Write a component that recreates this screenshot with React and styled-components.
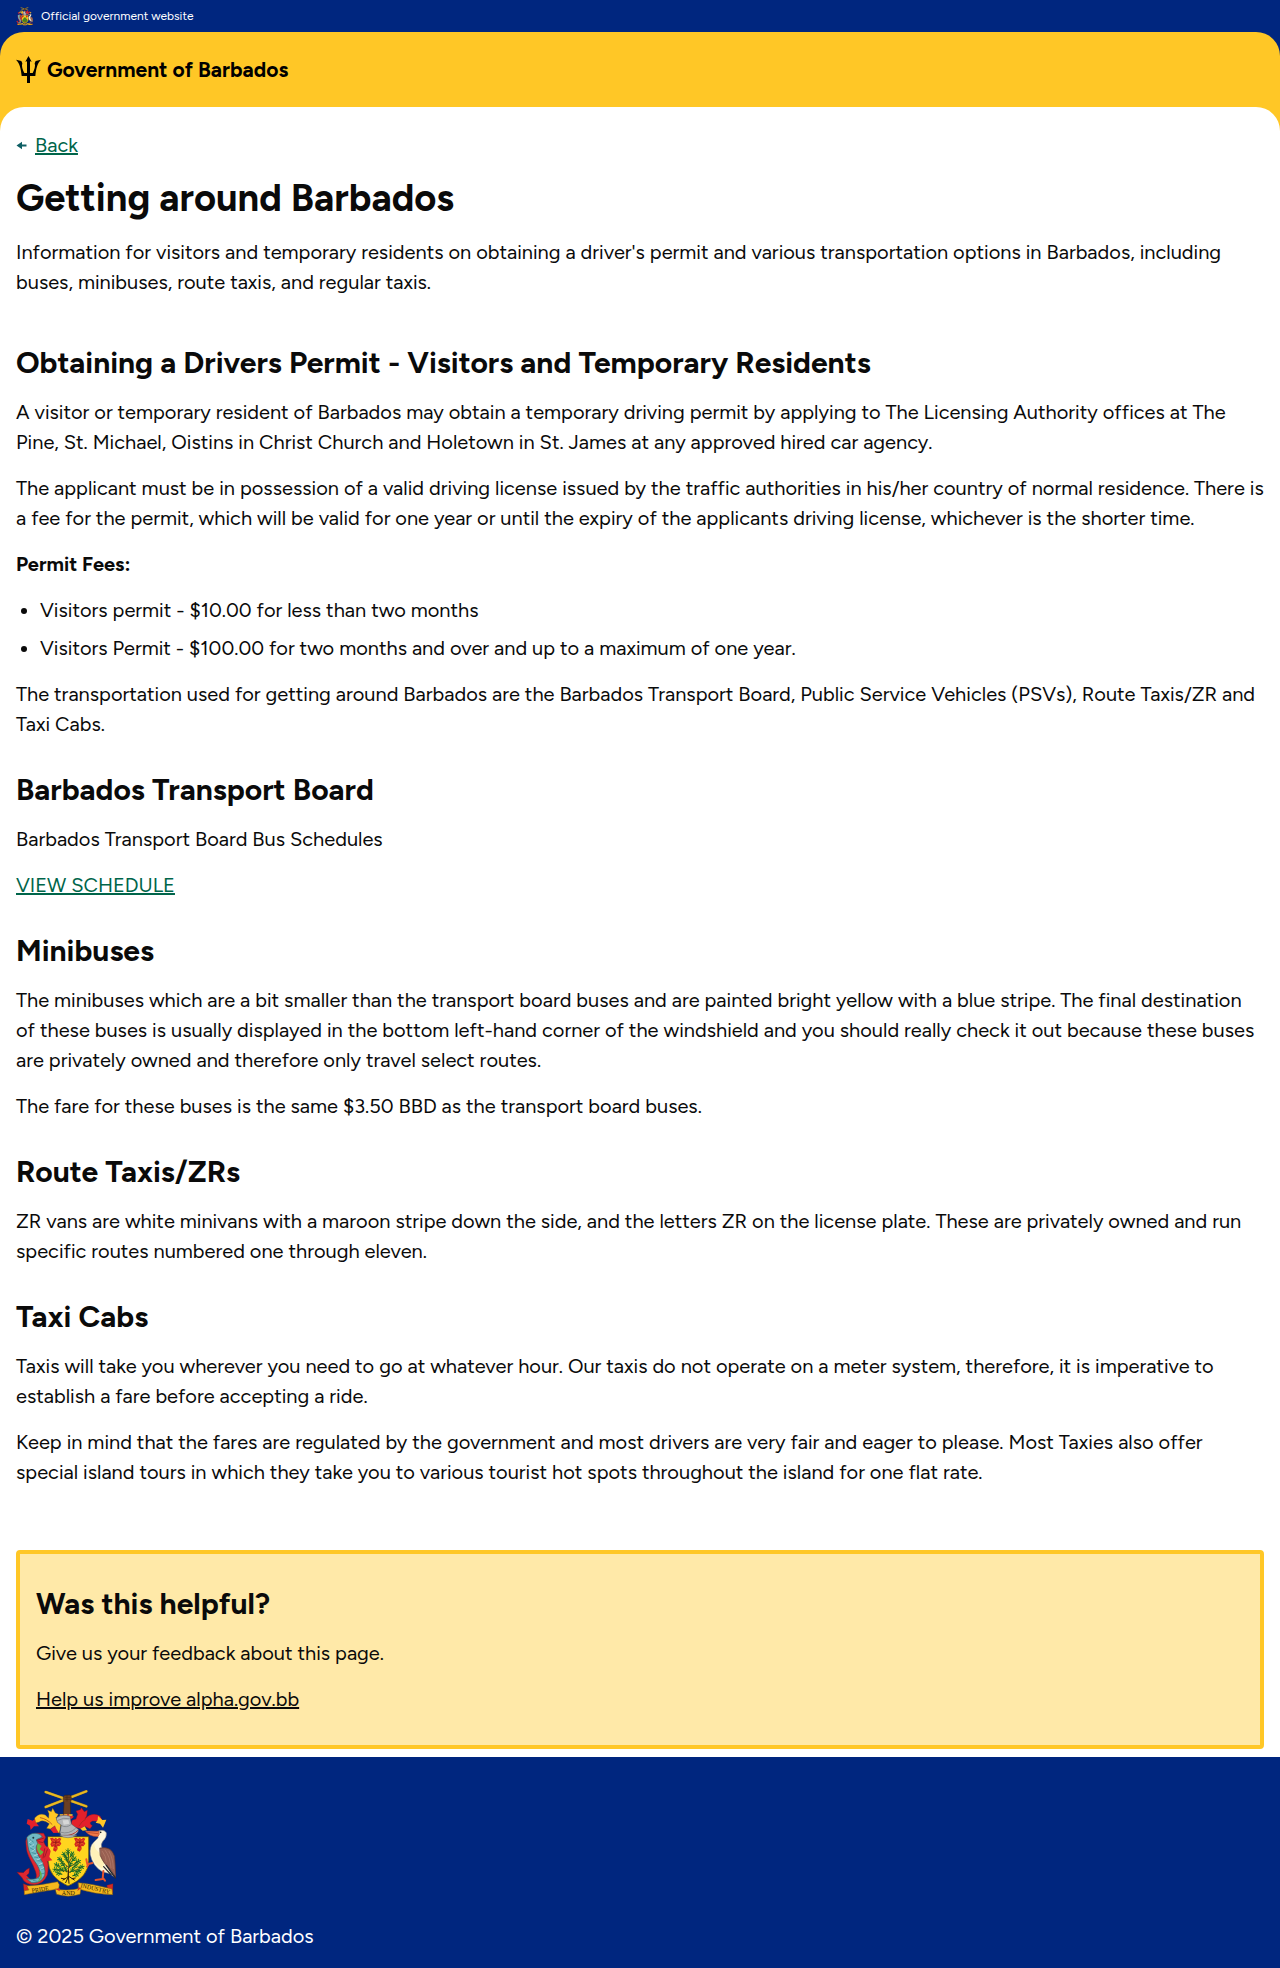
import React from "react";
import styled, { createGlobalStyle } from "styled-components";

const color = {
  blue: "#00267f",
  yellow: "#ffc726",
  paleYellow: "#ffe9a8",
  green: "#00654a",
  teal: "#0e5f64",
  ink: "#0a0a0a",
  white: "#ffffff",
};

const GlobalStyle = createGlobalStyle`
  *, *::before, *::after {
    box-sizing: border-box;
  }
  body {
    margin: 0;
    background: ${color.white};
    color: ${color.ink};
    font-family: Figtree, Lato, Roboto, sans-serif;
    font-size: 20px;
    line-height: 30px;
  }
`;

const Page = styled.div`
  display: flex;
  flex-direction: column;
  min-height: 100vh;
`;

const OfficialBar = styled.div`
  display: flex;
  align-items: center;
  gap: 8px;
  height: 32px;
  padding: 0 16px;
  background: ${color.blue};
  color: ${color.white};
  font-size: 12px;
  line-height: 16px;
`;

const Backdrop = styled.div`
  background: ${(p) => p.$color};
`;

const Masthead = styled.header`
  display: flex;
  align-items: center;
  height: 75px;
  padding: 0 16px;
  border-radius: 24px 24px 0 0;
  background: ${color.yellow};
`;

const Brand = styled.a`
  display: flex;
  align-items: center;
  gap: 6px;
  color: #000000;
  font-size: 21px;
  font-weight: 700;
  text-decoration: none;
`;

const Main = styled.main`
  padding: 23px 16px 8px;
  border-radius: 24px 24px 0 0;
  background: ${color.white};
`;

const BackRow = styled.nav`
  display: flex;
  align-items: center;
  gap: 8px;
  margin-bottom: 15px;
`;

const Link = styled.a`
  color: ${(p) => (p.$plain ? color.ink : color.green)};
  text-decoration: underline;
  text-decoration-thickness: 2px;
`;

const Title = styled.h1`
  margin: 0 0 16px;
  font-size: 38px;
  line-height: 46px;
  font-weight: 700;
`;

const Text = styled.p`
  margin: 0;
`;

const Article = styled.article`
  display: flex;
  flex-direction: column;
  gap: 32px;
  margin-top: 47px;
  margin-bottom: 63px;
`;

const Section = styled.section`
  display: flex;
  flex-direction: column;
  align-items: flex-start;
  gap: 16px;
`;

const Heading = styled.h2`
  margin: 0;
  font-size: 30px;
  line-height: 37px;
  font-weight: 700;
`;

const List = styled.ul`
  display: flex;
  flex-direction: column;
  gap: 8px;
  margin: 0;
  padding-left: 24px;
`;

const Feedback = styled(Section)`
  padding: 31px 16px;
  border: 4px solid ${color.yellow};
  border-radius: 4px;
  background: ${color.paleYellow};
`;

const Footer = styled.footer`
  display: flex;
  flex: 1;
  flex-direction: column;
  align-items: flex-start;
  gap: 22px;
  padding: 32px 16px 16px;
  background: ${color.blue};
  color: ${color.white};
`;

const Drawing = styled.svg`
  display: block;
  flex: none;
`;

function Trident() {
  return (
    <Drawing width="25" height="27" viewBox="48 168 75 81" aria-hidden="true">
      <g fill="#000000">
        <path d="M85.500 168 L95 185 L90 184 V219 H98 C103 210 107 198 104 190 L107 183 L123 179 C112 190 108 206 106 228 H90 V249 H81 V228 H65 C63 206 59 190 48 179 L64 183 L67 190 C64 198 68 210 73 219 H81 V184 L76 185 Z" />
      </g>
    </Drawing>
  );
}

function BackArrow() {
  return (
    <Drawing width="11" height="9" viewBox="0 0 11 9" aria-hidden="true">
      <path d="M0.500 4.500 L6 0.800 V3.500 H10.500 V5.500 H6 V8.200 Z" fill={color.teal} />
    </Drawing>
  );
}

const boughs = [
  [174, 206, 0], [163, 215, -35], [186, 214, 35], [150, 229, -50], [170, 227, -10],
  [192, 228, 40], [204, 236, 65], [141, 246, -65], [158, 243, -35], [181, 243, 20],
  [197, 248, 55], [214, 252, 75], [137, 260, -80], [153, 259, -50], [205, 264, 75],
  [188, 261, 45], [166, 257, -20], [146, 271, -75], [198, 275, 70],
];

function Bough({ x, y, angle }) {
  return (
    <g transform={`translate(${x} ${y}) rotate(${angle})`}>
      <path d="M0 10 V-9 M0 6 L-6 1 M0 6 L6 1 M0 0 L-6 -5 M0 0 L6 -5" stroke="#1f7a2e" strokeWidth="2.800" fill="none" />
      <path d="M0 10 V-4" stroke="#173f17" strokeWidth="1.400" />
    </g>
  );
}

function Flower({ x }) {
  return (
    <g transform={`translate(${x} 180)`}>
      <path d="M-17 -14 L-8 -16 L-5 -11 L0 -16 L6 -11 L10 -16 L17 -13 L13 -5 L17 2 L11 10 L5 9 L6 18 L0 26 L-8 22 L-5 10 L-12 12 L-16 4 L-12 -4 Z" fill="#d3261f" />
      <path d="M-10 -9 L-3 -4 L1 -11 M5 -6 L11 -9 M-10 4 L-3 1 L1 7 L6 0 L12 4 M-3 14 L3 18" stroke="#ee8a22" strokeWidth="1.500" fill="none" />
      <path d="M-7 -2 L8 -2 M0 -7 V10" stroke="#7b1712" strokeWidth="1.600" />
    </g>
  );
}

function Crest({ width, height }) {
  return (
    <Drawing width={width} height={height} viewBox="18 18 300 330" role="img" aria-label="Barbados coat of arms">
      <g strokeLinecap="round" strokeLinejoin="round">
        {/* Arm holding crossed sugar canes */}
        <path d="M107 27 L229 70 M107 72 L229 25" stroke="#a87d18" strokeWidth="8" />
        <path d="M107 27 L229 70 M107 72 L229 25" stroke="#e8b923" strokeWidth="6" />
        <path d="M160 94 L162 60 Q156 42 164 37 L180 36 Q188 42 181 60 L182 94 Z" fill="#6b3f24" stroke="#33200f" strokeWidth="1.500" />
        <path d="M165 43 H181 M165 49 H182 M171 37 V54" stroke="#3d2413" strokeWidth="1.500" />

        {/* Mantling */}
        <path d="M53 108 L68 113 L80 104 L79 119 L87 130 L72 130 L62 141 L60 128 L50 122 Z" fill="#e3202b" />
        <path d="M74 105 Q88 88 106 96 L116 106 L117 92 L113 82 L124 86 L128 76 L136 90 L145 94 L139 104 L144 119 L153 122 L148 151 Q135 143 135 128 L121 138 L110 136 L118 122 Q99 108 87 117 L78 119 Z" fill="#ffc726" stroke="#946d10" strokeWidth="1" />
        <path d="M121 139 L134 129 L146 149 L130 150 Z" fill="#e3202b" />
        <path d="M146 102 Q169 84 192 101 L181 110 L151 112 Z" fill="#e3202b" />
        <path d="M187 112 L198 108 L203 94 L198 84 L211 80 L214 74 L223 86 L232 82 L230 99 L225 107 Q247 86 270 99 L276 111 L264 115 L248 114 Q233 119 247 128 L240 137 L224 130 L212 137 L197 133 L192 148 L181 130 Z" fill="#e3202b" stroke="#941117" strokeWidth="1" />
        <path d="M264 99 L277 111 L289 110 L285 120 L279 134 L270 122 L257 119 L263 111 Z" fill="#ffc726" />
        <path d="M211 137 L224 130 L231 142 L218 143 Z" fill="#ffc726" />
        <path d="M91 104 Q112 108 126 124 M226 109 Q215 115 207 129" stroke="#9b261d" strokeWidth="2" fill="none" />
        <path d="M151 96 H158 M164 96 H170 M178 96 H186" stroke="#ffc726" strokeWidth="5" />

        {/* Helmet */}
        <path d="M139 104 Q159 92 180 100 L184 123 L205 139 Q208 150 188 160 Q169 170 153 159 L150 148 L154 126 Q138 120 139 104 Z" fill="#b4b6b8" stroke="#4c4f54" strokeWidth="1.500" />
        <path d="M143 112 Q162 102 178 107 M155 128 Q169 136 183 125 M153 148 Q176 155 196 137" stroke="#74787d" strokeWidth="2" fill="none" />
        <path d="M158 112 L175 111 L178 122 L161 125 Z" fill="#d6d7d7" />
        <path d="M161 159 Q191 157 203 143" stroke="#bd3830" strokeWidth="3" fill="none" />

        {/* Shield */}
        <path d="M114 161 H236 V232 Q236 283 174 309 Q115 283 114 232 Z" fill="#ffd51f" stroke="#5c4a08" strokeWidth="2" />
        <path d="M150 157 Q173 172 200 157 Z" fill="#b4b6b8" stroke="#61656b" strokeWidth="1.500" />
        <Flower x={137} />
        <Flower x={209} />
        <path d="M175 205 Q179 245 174 281 M175 252 L149 233 M176 254 L204 236 M175 265 L145 261 M176 268 L209 258 M175 240 L163 218 M176 240 L189 218" stroke="#4a3517" strokeWidth="2.500" fill="none" />
        {boughs.map(([x, y, angle]) => (
          <Bough key={`${x}-${y}`} x={x} y={y} angle={angle} />
        ))}
        <path d="M175 262 V285 M175 281 L159 291 M175 282 L167 299 M175 280 L177 301 M176 280 L193 291 M164 288 L154 286 M186 287 L196 285" stroke="#2f210f" strokeWidth="3" fill="none" />

        {/* Dolphin */}
        <path d="M83 150 L101 151 L107 163 L101 176 L106 187 L118 199 L112 223 L109 218 Q119 250 112 276 Q101 303 73 305 Q44 304 36 284 L21 268 L40 269 Q49 258 58 255 L57 271 L50 277 Q61 294 74 291 Q82 284 77 266 Q69 246 60 229 Q48 207 48 184 Q44 161 64 154 Z" fill="#df2730" stroke="#7f1724" strokeWidth="1.500" />
        <path d="M51 163 Q65 144 90 154 L97 162 L79 170 L83 182 Q73 194 84 216 Q110 254 104 277 Q94 302 65 299 L49 287 Q75 292 87 282 Q95 268 81 245 Q56 212 54 190 Z" fill="#70b9c4" stroke="#28676d" strokeWidth="2" />
        <path d="M60 169 L70 177 M59 183 L70 190 M61 195 L72 201 M66 209 L77 212 M73 222 L84 224 M80 233 L92 234 M87 247 L98 246 M92 259 L103 257 M91 273 L102 271 M84 286 L96 285 M70 292 L81 295" stroke="#337e8b" strokeWidth="2" />
        <path d="M64 174 L58 179 M71 185 L62 190 M75 199 L66 205 M83 214 L72 219 M91 226 L81 231 M98 240 L87 245 M101 254 L91 259" stroke="#c1e4e6" strokeWidth="2" />
        <path d="M84 181 L95 189 L89 199 L101 207 L92 217 Q80 205 81 189 Z" fill="#67b43d" />
        <path d="M98 212 L113 190 L122 204 L118 222 L127 232 L111 235 Z" fill="#df2730" />
        <path d="M91 267 Q97 281 87 293" stroke="#67b43d" strokeWidth="4" fill="none" />
        <path d="M104 197 L99 225 M112 200 L104 222 M81 172 L102 165 M86 176 L99 179" stroke="#811521" strokeWidth="2" />
        <circle cx="70" cy="164" r="3" fill="#193a3e" />

        {/* Pelican */}
        <path d="M263 145 Q280 137 289 149 Q291 164 279 174 Q270 185 277 197 L299 222 L309 246 L316 285 L300 272 L277 266 Q248 249 241 215 Q238 191 251 178 L264 165 Z" fill="#fff8dc" stroke="#91887c" strokeWidth="1.500" />
        <path d="M253 181 Q252 198 267 208 L284 236 L277 257 Q250 245 244 214 Q240 193 253 181 Z" fill="#fff1b9" />
        <path d="M270 195 Q304 188 314 220 L318 284 L300 258 Q282 244 271 218 Z" fill="#996052" stroke="#542e2a" strokeWidth="2" />
        <path d="M277 205 Q289 220 289 237 M285 201 Q301 222 303 254 M297 205 Q309 225 310 257" stroke="#b57d6c" strokeWidth="2" fill="none" />
        <path d="M289 247 L316 285 M281 251 L303 275" stroke="#27252d" strokeWidth="4" />
        <path d="M267 145 L226 144 Q235 160 263 161 Q271 155 267 145 Z" fill="#ef7848" stroke="#ad3e22" strokeWidth="1.500" />
        <path d="M231 148 L264 152" stroke="#ad3e22" strokeWidth="2" />
        <circle cx="272" cy="148" r="2.500" fill="#111111" />
        <path d="M280 264 L278 288 L257 291 M278 284 L285 293 M247 240 L232 244 L229 229 M236 243 L231 251" stroke="#e5532d" strokeWidth="6" fill="none" />

        {/* Motto scroll */}
        <path d="M40 302 L57 308 L64 318 L45 335 L42 323 Z M291 307 L309 302 L308 330 L295 332 Z" fill="#d52a24" stroke="#7c1b13" strokeWidth="1" />
        <path d="M51 309 Q97 306 143 296 L148 305 L146 318 Q97 325 43 335 L43 323 L56 321 Z" fill="#f6b91d" stroke="#805a0c" strokeWidth="1.500" />
        <path d="M205 299 Q244 302 306 318 L308 335 Q254 334 206 318 Z" fill="#f6b91d" stroke="#805a0c" strokeWidth="1.500" />
        <path d="M136 318 Q174 326 213 315 L210 334 Q174 345 140 334 Z" fill="#f6b91d" stroke="#805a0c" strokeWidth="1.500" />
        <path d="M137 318 L149 316 L149 325 Z M202 324 L206 313 L213 316 Z" fill="#d52a24" />
        <g fill="#2d2207" fontFamily="Liberation Serif, serif" fontSize="18" textAnchor="middle" aria-hidden="true">
          <text x="91" y="325" transform="rotate(-10 91 320)">PRIDE</text>
          <text x="175" y="337">AND</text>
          <text x="256" y="323" transform="rotate(13 256 317)">INDUSTRY</text>
        </g>
      </g>
    </Drawing>
  );
}

const permitFees = [
  "Visitors permit - $10.00 for less than two months",
  "Visitors Permit - $100.00 for two months and over and up to a maximum of one year.",
];

export default function App() {
  return (
    <Page>
      <GlobalStyle />
      <OfficialBar>
        <Crest width={17} height={19} />
        <span>Official government website</span>
      </OfficialBar>
      <Backdrop $color={color.blue}>
        <Masthead>
          <Brand href="#">
            <Trident />
            <span>Government of Barbados</span>
          </Brand>
        </Masthead>
      </Backdrop>
      <Backdrop $color={color.yellow}>
        <Main>
          <BackRow aria-label="Back">
            <BackArrow />
            <Link href="#">Back</Link>
          </BackRow>
          <Title>Getting around Barbados</Title>
          <Text>
            Information for visitors and temporary residents on obtaining a driver's permit and various
            transportation options in Barbados, including buses, minibuses, route taxis, and regular taxis.
          </Text>
          <Article>
            <Section>
              <Heading>Obtaining a Drivers Permit - Visitors and Temporary Residents</Heading>
              <Text>
                A visitor or temporary resident of Barbados may obtain a temporary driving permit by applying
                to The Licensing Authority offices at The Pine, St. Michael, Oistins in Christ Church and
                Holetown in St. James at any approved hired car agency.
              </Text>
              <Text>
                The applicant must be in possession of a valid driving license issued by the traffic
                authorities in his/her country of normal residence. There is a fee for the permit, which will
                be valid for one year or until the expiry of the applicants driving license, whichever is the
                shorter time.
              </Text>
              <Text>
                <strong>Permit Fees:</strong>
              </Text>
              <List>
                {permitFees.map((fee) => (
                  <li key={fee}>{fee}</li>
                ))}
              </List>
              <Text>
                The transportation used for getting around Barbados are the Barbados Transport Board, Public
                Service Vehicles (PSVs), Route Taxis/ZR and Taxi Cabs.
              </Text>
            </Section>
            <Section>
              <Heading>Barbados Transport Board</Heading>
              <Text>Barbados Transport Board Bus Schedules</Text>
              <Link href="#">VIEW SCHEDULE</Link>
            </Section>
            <Section>
              <Heading>Minibuses</Heading>
              <Text>
                The minibuses which are a bit smaller than the transport board buses and are painted bright
                yellow with a blue stripe. The final destination of these buses is usually displayed in the
                bottom left-hand corner of the windshield and you should really check it out because these
                buses are privately owned and therefore only travel select routes.
              </Text>
              <Text>The fare for these buses is the same $3.50 BBD as the transport board buses.</Text>
            </Section>
            <Section>
              <Heading>Route Taxis/ZRs</Heading>
              <Text>
                ZR vans are white minivans with a maroon stripe down the side, and the letters ZR on the
                license plate. These are privately owned and run specific routes numbered one through eleven.
              </Text>
            </Section>
            <Section>
              <Heading>Taxi Cabs</Heading>
              <Text>
                Taxis will take you wherever you need to go at whatever hour. Our taxis do not operate on a
                meter system, therefore, it is imperative to establish a fare before accepting a ride.
              </Text>
              <Text>
                Keep in mind that the fares are regulated by the government and most drivers are very fair and
                eager to please. Most Taxies also offer special island tours in which they take you to various
                tourist hot spots throughout the island for one flat rate.
              </Text>
            </Section>
          </Article>
          <Feedback>
            <Heading>Was this helpful?</Heading>
            <Text>Give us your feedback about this page.</Text>
            <Link $plain href="#">
              Help us improve alpha.gov.bb
            </Link>
          </Feedback>
        </Main>
      </Backdrop>
      <Footer>
        <Crest width={100} height={110} />
        <Text>© 2025 Government of Barbados</Text>
      </Footer>
    </Page>
  );
}
